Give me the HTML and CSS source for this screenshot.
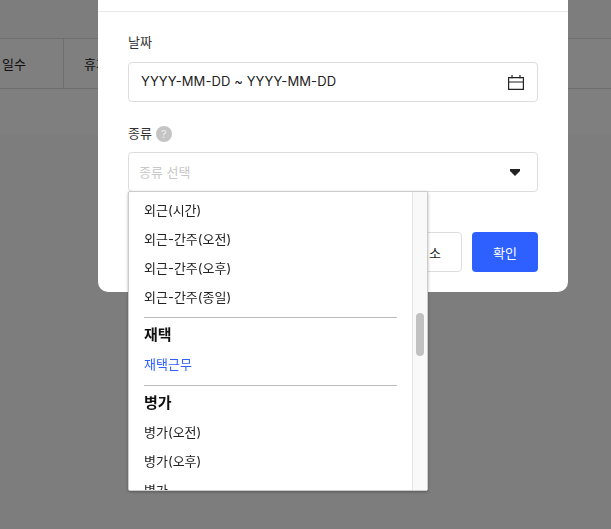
FILE: index.html
```html
<!DOCTYPE html>
<html lang="ko">
<head>
<meta charset="utf-8">
<title>휴가 신청</title>
<link rel="stylesheet" href="styles.css">
</head>
<body>
<main class="page">
  <div class="table-row">
    <div class="cell cell-days">일수</div>
    <div class="cell cell-type">휴가</div>
  </div>
  <div class="table-empty"></div>
</main>
<div class="overlay"></div>
<section class="modal">
  <div class="modal-head"></div>
  <div class="modal-body">
    <div class="field field-date">
      <div class="label">날짜</div>
      <div class="input">
        <span class="input-value">YYYY-MM-DD ~ YYYY-MM-DD</span>
        <svg class="cal" width="16" height="15" viewBox="0 0 16 15" fill="none" stroke="#222" stroke-width="1.2"><path d="M.6 2.6h14.8v11.8H.6zM.6 7h14.8M4 0v3.5M12 0v3.5"/></svg>
      </div>
    </div>
    <div class="field">
      <div class="label label-type">종류<span class="help">?</span></div>
      <div class="input select">
        <span class="placeholder">종류 선택</span>
        <svg class="caret" width="10" height="7" viewBox="0 0 10 7"><path d="M0 0h10v2L5 7 0 2z" fill="#222"/></svg>
      </div>
    </div>
    <div class="actions">
      <button class="btn btn-cancel">취소</button>
      <button class="btn btn-ok">확인</button>
    </div>
  </div>
</section>
<div class="dropdown">
  <div class="options">
    <div class="opt">외근(시간)</div>
    <div class="opt">외근-간주(오전)</div>
    <div class="opt">외근-간주(오후)</div>
    <div class="opt">외근-간주(종일)</div>
    <hr class="sep">
    <div class="group">재택</div>
    <div class="opt opt-active">재택근무</div>
    <hr class="sep">
    <div class="group">병가</div>
    <div class="opt">병가(오전)</div>
    <div class="opt">병가(오후)</div>
    <div class="opt">병가</div>
  </div>
  <div class="scrollbar"><div class="thumb"></div></div>
</div>
</body>
</html>
```
FILE: styles.css
```css
* { box-sizing: border-box; }
html, body { margin: 0; height: 100%; overflow: hidden; }
body {
  background: #fff;
  font-family: Inter, "Noto Sans CJK KR", sans-serif;
  font-size: 13px;
  color: #222;
}
.page { padding-top: 38px; background: #fafafa; height: 100%; }
.table-row {
  display: flex;
  height: 51px;
  border-top: 1px solid #ddd;
  border-bottom: 1px solid #ddd;
  background: #fff;
}
.cell { display: flex; align-items: center; height: 100%; }
.cell-days { width: 64px; justify-content: flex-end; padding-right: 37px; border-right: 1px solid #ddd; white-space: nowrap; }
.cell-type { padding-left: 20px; }
.table-empty { height: 45px; background: #fff; }
.overlay { position: fixed; inset: 0; background: rgba(0, 0, 0, .5); }
.modal {
  position: absolute;
  left: 98px;
  top: -20px;
  width: 470px;
  height: 312px;
  background: #fff;
  border-radius: 10px;
}
.modal-head { height: 32px; border-bottom: 1px solid #e8e8e8; }
.modal-body { padding: 20px 30px 0; }
.field { display: flex; flex-direction: column; }
.field-date { margin-bottom: 21px; }
.label { display: flex; align-items: center; gap: 4px; height: 20px; margin-bottom: 10px; line-height: 20px; color: #333; }
.label-type { margin-bottom: 9px; }
.help {
  display: flex; align-items: center; justify-content: center;
  width: 16px; height: 16px; border-radius: 50%;
  background: #c4c4c4; color: #eee; font-size: 11px;
  margin-top: 2px;
}
.input {
  display: flex; align-items: center; justify-content: space-between;
  height: 40px;
  padding: 0 12px;
  border: 1px solid #ddd;
  border-radius: 4px;
  background: #fff;
}
.input-value { color: #222; margin-top: -2px; letter-spacing: .1px; }
.cal { margin-top: 1px; margin-right: 1px; }
.select { padding: 0 17px 0 10px; }
.placeholder { color: #c8c8c8; margin-top: -2px; }
.caret { margin-top: 1px; }
.actions { display: flex; justify-content: flex-end; gap: 10px; margin-top: 40px; }
.btn { width: 66px; height: 40px; border-radius: 4px; font: inherit; }
.btn-cancel { border: 1px solid #ddd; background: #fff; color: #222; }
.btn-ok { border: 0; background: #2e5fff; color: #fff; }
.dropdown {
  position: absolute;
  left: 128px;
  top: 191px;
  width: 300px;
  height: 300px;
  display: flex;
  background: #fff;
  border: 1px solid #ccc;
  border-radius: 2px;
  overflow: hidden;
  box-shadow: 0 1px 3px rgba(0, 0, 0, .3);
}
.options { flex: 1; padding: 4px 15px 0 15px; overflow: hidden; color: #222; }
.opt { height: 29px; line-height: 28px; white-space: nowrap; }
.opt-active { height: 30px; color: #2e5fff; }
.group { height: 29px; margin-top: 3px; line-height: 27px; font-size: 15px; font-weight: 700; color: #111; }
.sep { height: 1px; margin: 5px 0 0; border: 0; background: #bbb; }
.scrollbar { position: relative; width: 15px; background: #f9f9f9; border-left: 1px solid #e4e4e4; }
.thumb { position: absolute; left: 3px; top: 121px; width: 8px; height: 43px; border-radius: 4px; background: #c1c1c1; }
```
